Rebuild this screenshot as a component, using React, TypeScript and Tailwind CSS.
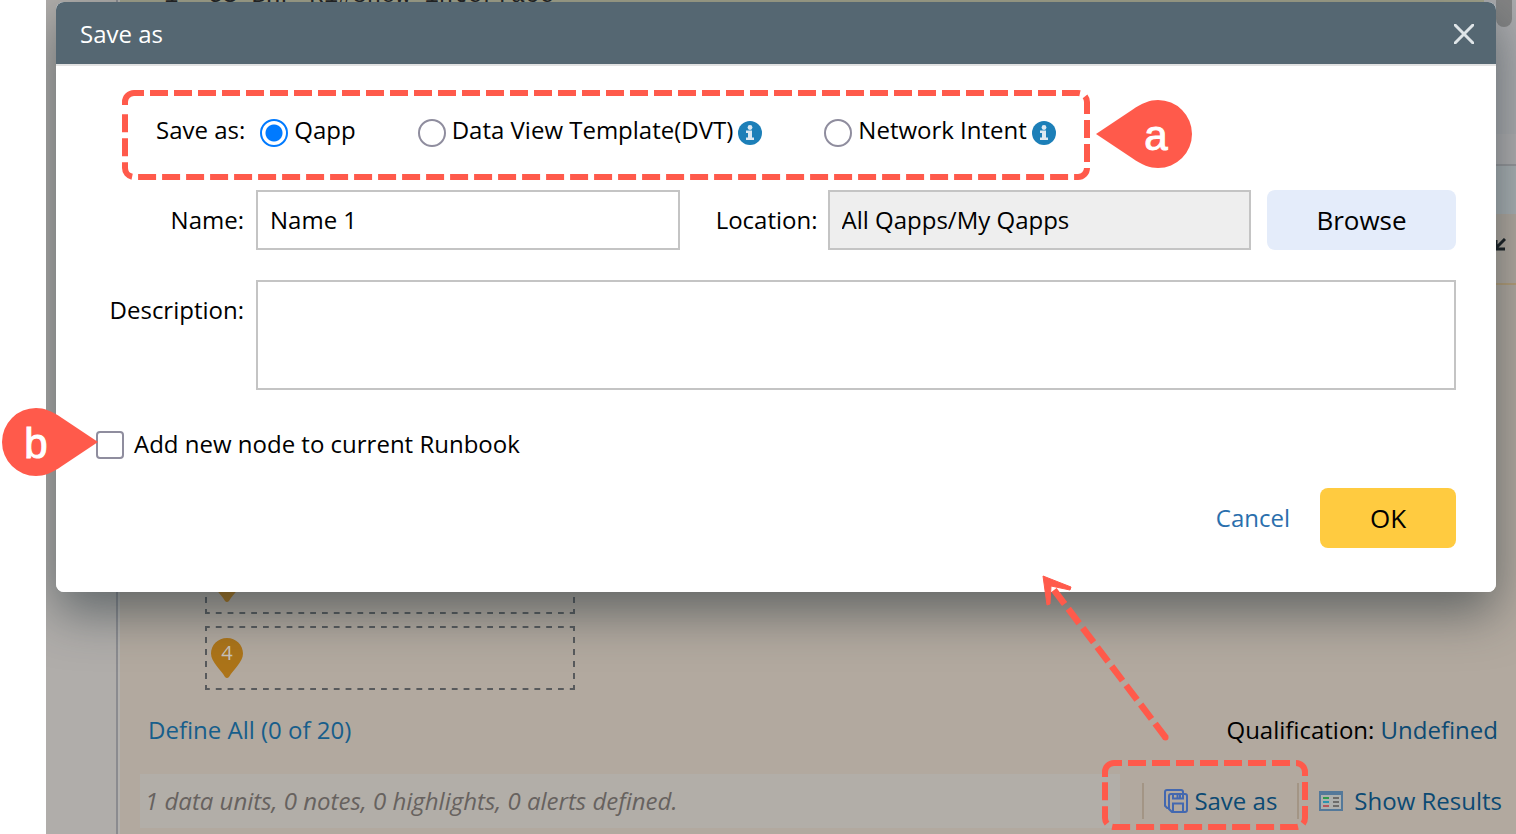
import { useState } from "react";
import type { ReactNode } from "react";

const ACCENT = "#ff5a4b";

function InfoIcon() {
  return (
    <svg viewBox="0 0 24 24" className="mt-[6px] size-6 shrink-0" aria-hidden="true">
      <circle cx="12" cy="12" r="12" fill="#1c7fb8" />
      <circle cx="12" cy="6.500" r="2.400" fill="#dce9f2" />
      <path d="M8 9.500H14V16.500H16V19H8V16.500H10V12H8Z" fill="#dce9f2" />
    </svg>
  );
}

function SaveCopyIcon() {
  return (
    <svg viewBox="0 0 24 24" className="size-6 shrink-0" fill="none" stroke="#4368b0" strokeWidth="2" aria-hidden="true">
      <path d="M4.500 19H3.200L1 16.800V3Q1 1 3 1H17Q19 1 19 3V4.500" />
      <path d="M7 5H21Q23 5 23 7V21Q23 23 21 23H8L5 20V7Q5 5 7 5Z" />
      <path d="M9 5V9.500H19V5M13.500 5V9M16 5V9" />
      <path d="M9 23V14.500H19V23" />
    </svg>
  );
}

function ResultsIcon() {
  return (
    <svg viewBox="0 0 24 24" className="size-6 shrink-0" aria-hidden="true">
      <path d="M0 2H24V22H0Z" fill="#54799a" />
      <path d="M2 6H22V20H2Z" fill="#aeb0ae" />
      <path d="M4 9H10" stroke="#2f9a4b" strokeWidth="2" />
      <path d="M4 13H10" stroke="#2b93ae" strokeWidth="2" />
      <path d="M4 17H10" stroke="#b4565b" strokeWidth="2" />
      <path d="M14 9H20M14 13H20M14 17H20" stroke="#6d6c6a" strokeWidth="2" />
    </svg>
  );
}

function Pin({ label }: { label: string }) {
  return (
    <div className="relative h-10 w-8">
      <svg viewBox="0 0 32 40" className="size-full" aria-hidden="true">
        <path d="M16 0C7 0 0 7 0 15.500C0 24 10 32 14 39Q16 41 18 39C22 32 32 24 32 15.500C32 7 25 0 16 0Z" fill="#ac7419" />
      </svg>
      <span className="absolute inset-x-0 top-0 text-center text-[20px] leading-[30px] text-[#c8c3bb]">{label}</span>
    </div>
  );
}

function StepSlot({ label }: { label: string }) {
  return (
    <div className="relative h-16 w-[370px] pl-[6px] pt-3">
      <svg viewBox="0 0 370 64" className="absolute inset-0 size-full" fill="none" stroke="#585a5c" strokeWidth="2" aria-hidden="true">
        <path d="M0 1H370M0 63H370" strokeDasharray="5.800 6" strokeDashoffset="1" />
        <path d="M1 0V64M369 0V64" strokeDasharray="6 6" strokeDashoffset="1" />
      </svg>
      <Pin label={label} />
    </div>
  );
}

function Callout({ letter, flip }: { letter: string; flip?: boolean }) {
  return (
    <div className="relative h-[68px] w-24">
      <svg viewBox="0 0 96 68" className={flip ? "size-full -scale-x-100" : "size-full"} aria-hidden="true">
        <path d="M0 34L36 10C46 3 54 0 62 0A34 34 0 0 1 62 68C54 68 46 65 36 58Z" fill={ACCENT} />
      </svg>
      <span
        className={
          "absolute top-0 w-[68px] text-center font-['Liberation_Sans',sans-serif] text-[42px] leading-[72px] text-white [-webkit-text-stroke:1px_white] " +
          (flip ? "left-0" : "right-[2px]")
        }
      >
        {letter}
      </span>
    </div>
  );
}

function TypeOption({ label, checked, onSelect, children }: { label: string; checked: boolean; onSelect: () => void; children?: ReactNode }) {
  return (
    <div className="flex items-center gap-[5px]">
      <label className="flex items-center gap-[6px]">
        <input
          type="radio"
          name="save-type"
          checked={checked}
          onChange={onSelect}
          className="mt-[6px] size-7 shrink-0 appearance-none rounded-full border-2 border-[#8f8d9e] bg-white checked:border-[#007aff] checked:bg-[radial-gradient(circle,#007aff_8px,white_9px)]"
        />
        <span className="whitespace-nowrap">{label}</span>
      </label>
      {children}
    </div>
  );
}

export default function App() {
  const [type, setType] = useState("qapp");
  const [name, setName] = useState("Name 1");

  return (
    <div className="relative min-h-screen overflow-hidden bg-white font-['Open_Sans',sans-serif] text-[24px] leading-8 text-black">
      <main className="ml-[46px] flex min-h-screen bg-[#b0adaa]">
        <aside className="w-[72px] shrink-0 border-r-2 border-[#8b8b8f]" />
        <section className="flex min-w-0 flex-1 flex-col border-l-2 border-[#b3b1ae] bg-[#b2a99f]">
          <header className="flex h-[134px] bg-[#ababad]">
            <div className="flex h-2 flex-1 flex-col justify-end bg-[#a0a189] font-['Liberation_Mono',monospace] leading-6 text-[#222]">
              <div className="flex gap-[30px] pl-11">
                <span>1</span>
                <span>US-BHF-R1#show interface</span>
              </div>
            </div>
            <div className="flex w-8 justify-end pr-1">
              <div className="h-[27px] w-4 rounded-b-full bg-[#848484]" />
            </div>
          </header>
          <div className="h-8 border-b-2 border-[#97979a] bg-[#b0aeaf]" />
          <div className="h-12 bg-[#aab0b2]" />
          <div className="flex h-[71px] items-center justify-end border-b-2 border-[#b59e78] pb-2 pr-[10px]">
            <svg viewBox="0 0 14 14" className="size-[14px]" fill="none" stroke="#171c1f" strokeWidth="3" aria-hidden="true">
              <path d="M13 1L4 10M4 2V11H13" />
            </svg>
          </div>
          <div className="flex flex-1 flex-col justify-end gap-3 pl-[85px]">
            <StepSlot label="3" />
            <StepSlot label="4" />
          </div>
          <div className="mt-6 flex h-8 items-center justify-between pl-7 pr-[18px]">
            <a href="#define" className="text-[#175e8b]">Define All (0 of 20)</a>
            <span>
              Qualification: <a href="#qualification" className="text-[#0c4a73]">Undefined</a>
            </span>
          </div>
          <footer className="mb-[5px] mt-[27px] flex h-14 items-center pl-5 pr-[14px] text-[#0c4a73]">
            <p className="flex h-[54px] flex-1 items-center bg-[#b2aea8] pl-[5px] italic text-[#67625f]">
              1 data units, 0 notes, 0 highlights, 0 alerts defined.
            </p>
            <div className="relative ml-[22px] flex h-9 items-center border-x-2 border-[#a39585] px-5">
              <button type="button" className="flex items-center gap-[6px] whitespace-nowrap">
                <SaveCopyIcon />
                Save as
              </button>
              <svg viewBox="0 0 206 70" className="pointer-events-none absolute -left-[42px] -top-[23px] z-20 h-[70px] w-[206px]" fill="none" stroke={ACCENT} strokeWidth="6" aria-hidden="true">
                <path d="M26 3H194A9 9 0 0 1 203 12V58A9 9 0 0 1 194 67H12A9 9 0 0 1 3 58V19" strokeDasharray="18 6" />
                <path d="M3 17V12A9 9 0 0 1 12 3H20" />
              </svg>
              <svg viewBox="0 0 130 170" className="pointer-events-none absolute -left-[104px] bottom-[77px] z-20 h-[170px] w-[130px]" aria-hidden="true">
                <path d="M126 166L14 18" stroke={ACCENT} strokeWidth="6.500" strokeDasharray="18 6" />
                <circle cx="125.500" cy="165.500" r="3" fill={ACCENT} />
                <path d="M3 4L31 15L30 18L11 14L10 32L7 33Z" fill={ACCENT} stroke={ACCENT} strokeLinejoin="round" />
              </svg>
            </div>
            <button type="button" className="ml-5 flex items-center gap-[11px] whitespace-nowrap">
              <ResultsIcon />
              Show Results
            </button>
          </footer>
        </section>
      </main>

      <form
        role="dialog"
        aria-label="Save as"
        onSubmit={(e) => e.preventDefault()}
        className="absolute left-14 right-5 top-[2px] isolate rounded-lg bg-white"
      >
        <div className="pointer-events-none absolute inset-0 -z-10 rounded-lg shadow-[0_20px_50px_rgba(30,45,52,0.54)] [clip-path:inset(-10px_-20px_-100px_-10px)]" />
        <div className="absolute inset-0 -z-10 rounded-lg bg-white" />
        <div className="flex h-16 items-center justify-between rounded-t-lg border-b-2 border-[#e2e2e2] bg-[#556772] px-6 pr-[22px] pt-[2px] text-white">
          <h1>Save as</h1>
          <button type="button" aria-label="Close">
            <svg viewBox="0 0 20 20" className="size-5" stroke="#dfe5e8" strokeWidth="3" aria-hidden="true">
              <path d="M0 0L20 20M20 0L0 20" />
            </svg>
          </button>
        </div>

        <div className="px-10 pb-11 pt-11">
          <div className="relative flex h-11 items-center pb-1 pl-[60px]">
            <span className="mr-[15px] whitespace-nowrap">Save as:</span>
            <div className="flex items-center gap-[62px]">
              <TypeOption label="Qapp" checked={type === "qapp"} onSelect={() => setType("qapp")} />
              <TypeOption label="Data View Template(DVT)" checked={type === "dvt"} onSelect={() => setType("dvt")}>
                <InfoIcon />
              </TypeOption>
              <TypeOption label="Network Intent" checked={type === "intent"} onSelect={() => setType("intent")}>
                <InfoIcon />
              </TypeOption>
            </div>
            <svg viewBox="0 0 968 90" className="pointer-events-none absolute -top-5 left-[26px] h-[90px] w-[968px]" fill="none" stroke={ACCENT} strokeWidth="6" aria-hidden="true">
              <path d="M28 3H956A9 9 0 0 1 965 12V78A9 9 0 0 1 956 87H12A9 9 0 0 1 3 78V21" strokeDasharray="18 6" />
              <path d="M3 15V12A9 9 0 0 1 12 3H22" />
            </svg>
            <div className="pointer-events-none absolute -top-[10px] left-[1000px]">
              <Callout letter="a" />
            </div>
          </div>

          <div className="mt-9 flex h-[60px] items-center">
            <label htmlFor="name" className="w-40 shrink-0 pr-3 text-right">Name:</label>
            <input
              id="name"
              value={name}
              onChange={(e) => setName(e.target.value)}
              className="h-full min-w-0 flex-1 border-2 border-[#c4c4c4] bg-white px-3 pb-[2px]"
            />
            <label htmlFor="location" className="w-[148px] shrink-0 pr-[10px] text-right">Location:</label>
            <input
              id="location"
              readOnly
              value="All Qapps/My Qapps"
              className="h-full min-w-0 flex-1 border-2 border-[#c4c4c4] bg-[#eeeeee] px-3 pb-[2px]"
            />
            <button type="button" className="ml-4 h-full w-[189px] shrink-0 rounded-lg bg-[#e4ecfa] text-[26px]">
              Browse
            </button>
          </div>

          <div className="mt-[30px] flex items-start">
            <label htmlFor="description" className="w-40 shrink-0 pr-3 pt-[14px] text-right">Description:</label>
            <textarea id="description" className="block h-[110px] min-w-0 flex-1 resize-none border-2 border-[#c4c4c4] px-3 py-2" />
          </div>

          <div className="relative mt-10 flex h-[30px] items-center">
            <label className="flex items-center gap-[10px]">
              <input
                type="checkbox"
                className="size-7 shrink-0 appearance-none rounded-[4px] border-2 border-[#8f8d9e] bg-white checked:bg-[#007aff]"
              />
              <span className="pb-[2px]">Add new node to current Runbook</span>
            </label>
            <div className="pointer-events-none absolute -left-[94px] -top-[22px]">
              <Callout letter="b" flip />
            </div>
          </div>

          <div className="mt-7 flex h-[60px] items-center justify-end gap-[30px]">
            <button type="button" className="text-[#2a6fad]">Cancel</button>
            <button type="submit" className="h-full w-[136px] rounded-lg bg-[#ffcb40] text-[26px]">OK</button>
          </div>
        </div>
      </form>
    </div>
  );
}
